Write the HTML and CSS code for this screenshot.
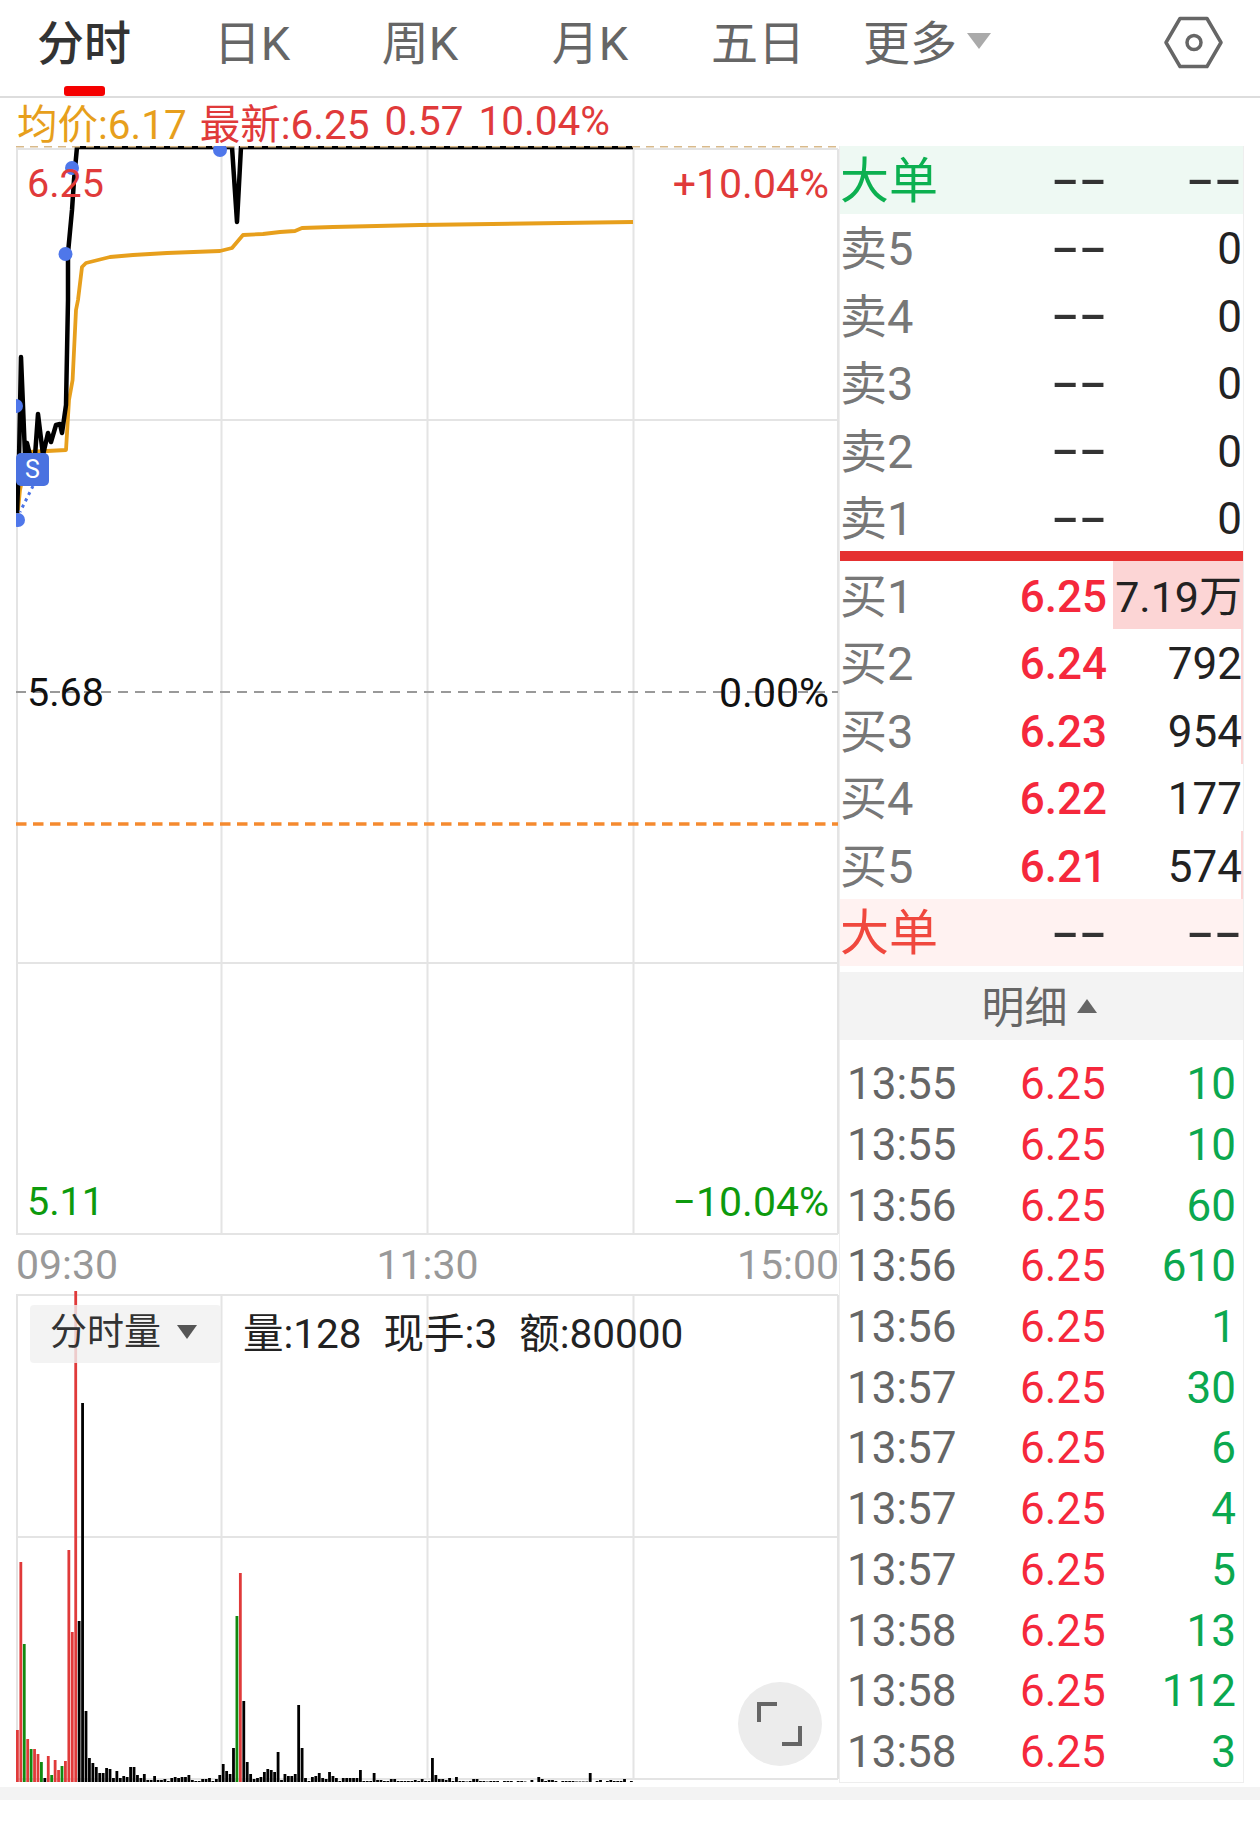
FILE: index.html
```html
<!DOCTYPE html>
<html lang="zh-CN">
<head>
    <meta charset="UTF-8">
    <meta name="viewport" content="width=device-width, initial-scale=1.0">
    <title>分时</title>
    <link rel="stylesheet" href="styles.css">
</head>
<body>
    <div class="tabs">
        <span class="tab active">分时</span>
        <span class="tab">日K</span>
        <span class="tab">周K</span>
        <span class="tab">月K</span>
        <span class="tab">五日</span>
        <span class="tab">更多<i class="caret-more"></i></span>
        <svg class="settings" width="60" height="54" viewBox="1164 16 60 54">
            <path d="M1166 42.5L1180 18.5H1207L1221 42.5L1207 66.5H1180Z" fill="none" stroke="#666" stroke-width="3.5" stroke-linejoin="round"/>
            <circle cx="1194" cy="42.5" r="7" fill="none" stroke="#666" stroke-width="3.5"/>
        </svg>
    </div>

    <div class="main">
        <div class="left">
            <div class="info">
                <span class="avg">均价:6.17</span>
                <span>最新:6.25</span>
                <span>0.57</span>
                <span>10.04%</span>
            </div>

            <div class="chart">
                <svg width="823" height="1090" viewBox="16 146 823 1090">
                    <g stroke="#e4e4e4" stroke-width="2" fill="none">
                        <path d="M16 149H838M16 420H838M16 963H838M16 1234H838"/>
                        <path d="M17 149V1234M221.500 149V1234M427.500 149V1234M633.500 149V1234M838 149V1234"/>
                    </g>
                    <path d="M16 692H838" stroke="#999" stroke-width="2" stroke-dasharray="10 7"/>
                    <path d="M16 824H838" stroke="#f58a2f" stroke-width="3.500" stroke-dasharray="10.500 6.500"/>
                    <polyline fill="none" stroke="#e79f1c" stroke-width="3.800" stroke-linejoin="round" points="17,520 20,490 28,452 66,450 69,400 72.600,380 76,310 78,300 82,267 86,263 110,257 133,255 167,253 220,251 232,248 243,235 263,234 280,232 295,231 302,228 333,227 420,225 633,222"/>
                    <polyline fill="none" stroke="#000" stroke-width="4.500" stroke-linejoin="round" points="17,513 19,460 21,357 25,455 27,443 30,455 34,470 38,414 43,455 48,433 51,442 56,425 60,424 62,433 66,405 68,300 68,253 72,210 74,180 77,147 232,147 237,222 241,147 633,147"/>
                    <path d="M16 146.500H838" stroke="#d8b98a" stroke-width="2" stroke-dasharray="8 6"/>
                    <path d="M33 486L20 512" stroke="#4a72e6" stroke-width="3" stroke-dasharray="3 4"/>
                    <g fill="#4f77ea">
                        <circle cx="72" cy="168" r="7"/>
                        <circle cx="65.500" cy="254" r="7"/>
                        <circle cx="16" cy="406" r="7"/>
                        <circle cx="220" cy="150" r="7"/>
                        <circle cx="18" cy="520" r="7"/>
                    </g>
                </svg>
                <span class="mark-s">S</span>
                <span class="lbl lbl-top lbl-left up">6.25</span>
                <span class="lbl lbl-top lbl-right pct up">+10.04%</span>
                <span class="lbl lbl-mid lbl-left">5.68</span>
                <span class="lbl lbl-mid lbl-right pct">0.00%</span>
                <span class="lbl lbl-bot lbl-left down">5.11</span>
                <span class="lbl lbl-bot lbl-right pct down">−10.04%</span>
            </div>

            <div class="axis">
                <span>09:30</span>
                <span>11:30</span>
                <span>15:00</span>
            </div>

            <div class="vol">
                <svg width="823" height="493" viewBox="16 1290 823 493">
                    <g stroke="#e4e4e4" stroke-width="2" fill="none">
                        <path d="M16 1295H838M16 1537H838M16 1779H838"/>
                        <path d="M17 1295V1779M221.500 1295V1779M427.500 1295V1779M633.500 1295V1779M838 1295V1779"/>
                    </g>
                    <g id="volBars"></g>
                </svg>
                <div class="vol-head">
                    <span class="vol-type"><span class="vol-name">分时量</span><i class="caret-vol"></i></span>
                    <div class="vol-info">
                        <span>量:128</span>
                        <span>现手:3</span>
                        <span>额:80000</span>
                    </div>
                </div>
                <span class="fullscreen">
                    <svg width="84" height="84" viewBox="0 0 84 84">
                        <path d="M21 40V22H39M62 44V62H44" fill="none" stroke="#666" stroke-width="4"/>
                    </svg>
                </span>
            </div>
        </div>

        <div class="book">
            <div class="row big big-sell"><span class="name">大单</span><span class="price"><span class="dash">--</span></span><span class="qty"><span class="dash">--</span></span></div>
            <div class="row"><span class="name">卖5</span><span class="price"><span class="dash">--</span></span><span class="qty">0</span></div>
            <div class="row"><span class="name">卖4</span><span class="price"><span class="dash">--</span></span><span class="qty">0</span></div>
            <div class="row"><span class="name">卖3</span><span class="price"><span class="dash">--</span></span><span class="qty">0</span></div>
            <div class="row"><span class="name">卖2</span><span class="price"><span class="dash">--</span></span><span class="qty">0</span></div>
            <div class="row"><span class="name">卖1</span><span class="price"><span class="dash">--</span></span><span class="qty">0</span></div>
            <div class="spread"></div>
            <div class="row"><i class="depth" style="width: 32.3%"></i><span class="name">买1</span><span class="price bid">6.25</span><span class="qty wan">7.19万</span></div>
            <div class="row"><i class="depth" style="width: 0.5%"></i><span class="name">买2</span><span class="price bid">6.24</span><span class="qty">792</span></div>
            <div class="row"><i class="depth" style="width: 0.6%"></i><span class="name">买3</span><span class="price bid">6.23</span><span class="qty">954</span></div>
            <div class="row"><span class="name">买4</span><span class="price bid">6.22</span><span class="qty">177</span></div>
            <div class="row"><i class="depth" style="width: 0.4%"></i><span class="name">买5</span><span class="price bid">6.21</span><span class="qty">574</span></div>
            <div class="row big big-buy"><span class="name">大单</span><span class="price"><span class="dash">--</span></span><span class="qty"><span class="dash">--</span></span></div>

            <div class="detail-head">明细<i class="caret-up"></i></div>

            <div class="trades">
                <div class="trade"><span class="time">13:55</span><span class="t-price">6.25</span><span class="t-qty">10</span></div>
                <div class="trade"><span class="time">13:55</span><span class="t-price">6.25</span><span class="t-qty">10</span></div>
                <div class="trade"><span class="time">13:56</span><span class="t-price">6.25</span><span class="t-qty">60</span></div>
                <div class="trade"><span class="time">13:56</span><span class="t-price">6.25</span><span class="t-qty">610</span></div>
                <div class="trade"><span class="time">13:56</span><span class="t-price">6.25</span><span class="t-qty">1</span></div>
                <div class="trade"><span class="time">13:57</span><span class="t-price">6.25</span><span class="t-qty">30</span></div>
                <div class="trade"><span class="time">13:57</span><span class="t-price">6.25</span><span class="t-qty">6</span></div>
                <div class="trade"><span class="time">13:57</span><span class="t-price">6.25</span><span class="t-qty">4</span></div>
                <div class="trade"><span class="time">13:57</span><span class="t-price">6.25</span><span class="t-qty">5</span></div>
                <div class="trade"><span class="time">13:58</span><span class="t-price">6.25</span><span class="t-qty">13</span></div>
                <div class="trade"><span class="time">13:58</span><span class="t-price">6.25</span><span class="t-qty">112</span></div>
                <div class="trade"><span class="time">13:58</span><span class="t-price">6.25</span><span class="t-qty">3</span></div>
            </div>
        </div>
    </div>

    <div class="band"></div>

    <script src="chart.js"></script>
</body>
</html>
```

FILE: styles.css
```css
body {
    margin: 0;
    background: white;
    color: #222;
    font-family: Roboto, "Noto Sans CJK SC", sans-serif;
    width: 1260px;
    height: 1824px;
    overflow: hidden;
}

i {
    display: block;
}

.tabs {
    display: grid;
    grid-template-columns: 168px 168px 168px 172px 164px 174px;
    height: 96px;
    border-bottom: 2px solid #ddd;
    position: relative;
}

.tab {
    display: flex;
    justify-content: center;
    align-items: center;
    padding-bottom: 18px;
    font-size: 47px;
    color: #666;
    position: relative;
}

.tab.active {
    color: #333;
    font-weight: 500;
}

.tab.active::after {
    content: "";
    position: absolute;
    left: 64px;
    bottom: 0;
    width: 41px;
    height: 10px;
    border-radius: 3px;
    background: #f50000;
}

.caret-more {
    width: 0;
    height: 0;
    margin: 4px 0 0 10px;
    border-left: 12px solid transparent;
    border-right: 12px solid transparent;
    border-top: 16px solid #aaa;
}

.settings {
    position: absolute;
    left: 1164px;
    top: 16px;
}

.main {
    display: flex;
    align-items: flex-start;
    padding-left: 16px;
}

.left {
    width: 823px;
    flex: none;
}

.info {
    display: flex;
    gap: 15px;
    height: 46px;
    padding-bottom: 2px;
    align-items: center;
    font-size: 40.500px;
    color: #e03a3a;
    white-space: nowrap;
    margin-left: 1px;
}

.info .avg {
    color: #e79f1c;
    margin-right: -2px;
}

.chart {
    height: 1090px;
    position: relative;
}

.chart svg,
.vol svg {
    display: block;
}

.lbl {
    position: absolute;
    font-size: 39.500px;
    line-height: 44px;
    color: #111;
}

.lbl.pct {
    font-size: 41px;
}

.lbl.up {
    color: #e03a3a;
}

.lbl.down {
    color: #0d9a0d;
}

.lbl-top {
    top: 16px;
}

.lbl-mid {
    top: 525px;
}

.lbl-bot {
    top: 1034px;
}

.lbl-left {
    left: 11px;
}

.lbl-right {
    right: 10px;
}

.mark-s {
    position: absolute;
    left: 0;
    top: 307px;
    width: 33px;
    height: 33px;
    border-radius: 5px;
    background: #4a72e0;
    color: white;
    font-size: 25px;
    line-height: 33px;
    text-align: center;
}

.axis {
    display: flex;
    justify-content: space-between;
    align-items: center;
    height: 50px;
    padding-top: 4px;
    font-size: 41px;
    color: #999;
}

.vol {
    height: 493px;
    position: relative;
}

.vol-head {
    position: absolute;
    left: 14px;
    top: 15px;
    display: flex;
    align-items: center;
    gap: 22px;
}

.vol-type {
    display: flex;
    align-items: center;
    width: 191px;
    height: 58px;
    box-sizing: border-box;
    padding-left: 20px;
    border-radius: 4px;
    background: rgba(240, 240, 240, 0.8);
    font-size: 37px;
    line-height: 44px;
    color: #333;
}

.vol-name {
    padding-bottom: 3px;
}

.caret-vol {
    width: 0;
    height: 0;
    margin: 0 0 4px 16px;
    border-left: 10px solid transparent;
    border-right: 10px solid transparent;
    border-top: 14px solid #555;
}

.vol-info {
    display: flex;
    gap: 22px;
    font-size: 40.500px;
    line-height: 48px;
    color: #222;
    white-space: nowrap;
}

.fullscreen {
    position: absolute;
    right: 17px;
    bottom: 17px;
    width: 84px;
    height: 84px;
    border-radius: 50%;
    background: #ececec;
}

.book {
    width: 405px;
    flex: none;
    box-sizing: border-box;
    margin-top: 48px;
    border: 1px solid #eee;
    border-top: 0;
}

.row {
    display: grid;
    grid-template-columns: 120px 147px 1fr;
    align-items: center;
    box-sizing: border-box;
    height: 67.500px;
    padding: 4px 1px 0 0;
    font-size: 44px;
    line-height: 50px;
    position: relative;
}

.name {
    color: #777;
    font-size: 47px;
    white-space: nowrap;
    position: relative;
}

.price,
.qty {
    text-align: right;
    white-space: nowrap;
    position: relative;
}

.qty.wan {
    font-size: 43px;
}

.price.bid {
    color: #f5283c;
    font-weight: 500;
}

.dash {
    display: inline-block;
    margin-bottom: 3px;
    transform: scaleX(1.85);
    transform-origin: right center;
    color: #333;
    font-weight: 500;
}

.depth {
    position: absolute;
    right: 0;
    top: 0;
    bottom: 0;
    background: #fcd5d5;
}

.big .name {
    font-size: 49px;
}

.big-sell {
    background: #eef9f3;
}

.big-sell .name {
    color: #0cb050;
}

.big-buy {
    background: #fff2f1;
}

.big-buy .name {
    color: #f0483e;
}

.spread {
    height: 10px;
    background: #e53030;
}

.detail-head {
    display: flex;
    justify-content: center;
    align-items: center;
    gap: 9px;
    height: 64px;
    padding: 0 5px 4px 0;
    margin-top: 6px;
    background: #f3f3f3;
    font-size: 43px;
    color: #666;
}

.caret-up {
    width: 0;
    height: 0;
    margin-top: 4px;
    border-left: 10px solid transparent;
    border-right: 10px solid transparent;
    border-bottom: 14px solid #666;
}

.trades {
    padding: 14px 7px 0 7px;
}

.trade {
    display: grid;
    grid-template-columns: 1fr 83px 133px;
    align-items: center;
    height: 60.700px;
    font-size: 44px;
}

.time {
    color: #666;
}

.t-price {
    color: #f5283c;
    text-align: right;
}

.t-qty {
    color: #0ba84f;
    text-align: right;
}

.band {
    height: 13px;
    margin-top: 4px;
    background: #f3f3f3;
}
```

FILE: chart.js
```js
const volumes = [
    52, 220, 138, 43, 33, 33, 28, 20, 4, 26, 7, 22, 12, 16, 21, 232, 150, 491, 161, 379,
    71, 24, 19, 15, 9, 9, 14, 13, 4, 11, 4, 6, 5, 15, 15, 7, 4, 8, 2, 2,
    6, 2, 2, 3, 1, 4, 5, 4, 5, 5, 7, 2, 1, 1, 3, 3, 4, 1, 3, 7,
    18, 11, 8, 34, 166, 209, 81, 20, 8, 3, 4, 5, 10, 13, 12, 10, 30, 2, 8, 6,
    6, 8, 77, 34, 4, 1, 5, 6, 9, 4, 3, 10, 6, 4, 1, 4, 4, 4, 4, 4,
    12, 1, 1, 1, 9, 2, 2, 1, 1, 3, 3, 1, 1, 1, 1, 1, 2, 1, 3, 1,
    1, 24, 7, 3, 3, 2, 4, 1, 5, 1, 1, 0.5, 1, 3, 3, 1, 1, 0.5, 1, 1,
    1, 0, 1, 1, 1, 0, 1, 1, 0.5, 0, 2, 0, 5, 3, 1, 2, 2, 1, 0, 1,
    1, 1, 1, 0.5, 0.5, 0.5, 0.5, 9, 0, 1, 2, 0, 1, 2, 1, 1, 1, 3, 0, 1
];
const redBars = [0, 1, 3, 5, 6, 9, 11, 12, 14, 15, 16, 17, 65];
const greenBars = [2, 4, 7, 10, 13, 64];
const baseline = 1782;

const group = document.getElementById('volBars');
volumes.forEach((height, i) => {
    const bar = document.createElementNS('http://www.w3.org/2000/svg', 'rect');
    bar.setAttribute('x', 16 + i * 3.43);
    bar.setAttribute('y', baseline - height);
    bar.setAttribute('width', 2.8);
    bar.setAttribute('height', height);
    bar.setAttribute('fill', redBars.includes(i) ? '#e03a3a' : greenBars.includes(i) ? '#118a11' : '#000');
    group.appendChild(bar);
});
```
